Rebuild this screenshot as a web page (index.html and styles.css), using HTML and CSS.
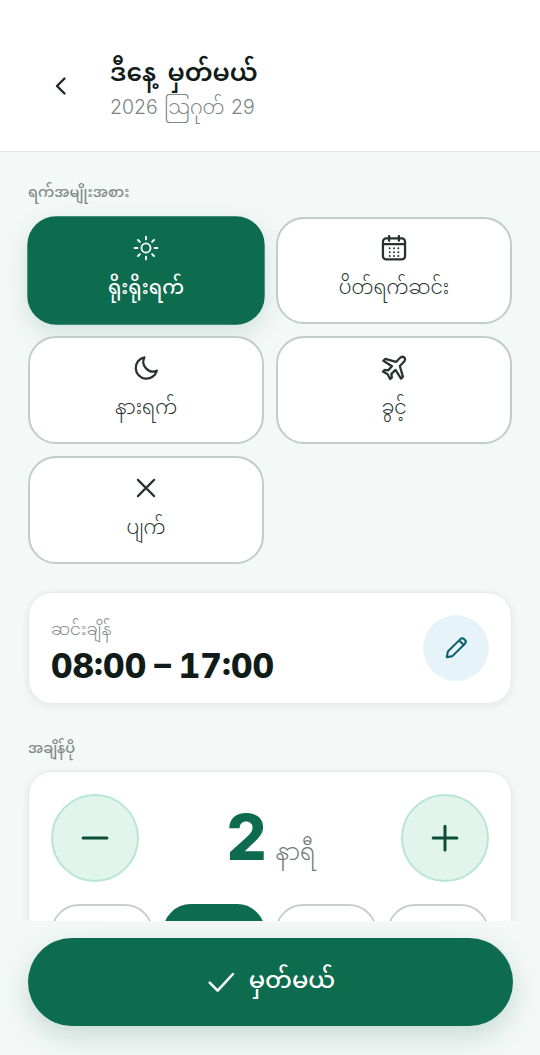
FILE: index.html
```html
<!DOCTYPE html>
<html lang="my">
<head>
<meta charset="utf-8">
<title>ဒီနေ့ မှတ်မယ်</title>
<link rel="stylesheet" href="styles.css">
</head>
<body>
<div class="app">
  <header class="header">
    <button class="back" aria-label="back">
      <svg viewBox="0 0 24 24" width="24" height="24"><path d="M15.5 4.5L8 12l7.5 7.5" class="st" stroke-width="2.4"/></svg>
    </button>
    <div class="titles">
      <div class="title">ဒီနေ့ မှတ်မယ်</div>
      <div class="date">2026 ဩဂုတ် 29</div>
    </div>
  </header>
  <main class="content">
    <div class="label">ရက်အမျိုးအစား</div>
    <div class="types">
      <button class="type active">
        <svg viewBox="0 0 24 24" width="26" height="26"><circle cx="12" cy="12" r="4.2" class="st" stroke-width="1.7"/><path d="M12 1.5v2.6M12 19.9v2.6M1.5 12h2.6M19.9 12h2.6M4.6 4.6l1.8 1.8M17.6 17.6l1.8 1.8M4.6 19.4l1.8-1.8M17.6 6.4l1.8-1.8" class="st" stroke-width="1.7"/></svg>
        <span>ရိုးရိုးရက်</span>
      </button>
      <button class="type">
        <svg viewBox="0 0 24 24" width="26" height="26"><rect x="1.8" y="3.2" width="20.4" height="19.4" rx="3" class="st" stroke-width="2.1"/><path d="M2 8.4h20M7.5 1v4.4M16.5 1v4.4" class="st" stroke-width="2.1"/><path d="M8 12.3h.01M12 12.3h.01M16 12.3h.01M8 16h.01M12 16h.01M16 16h.01M8 19.4h.01M12 19.4h.01M16 19.4h.01" class="st" stroke-width="1.8"/></svg>
        <span>ပိတ်ရက်ဆင်း</span>
      </button>
      <button class="type">
        <svg viewBox="0 0 24 24" width="26" height="26"><path d="M10.5 2.2A9.9 9.9 0 1 0 22 14.5 9 9 0 0 1 10.5 2.2z" class="st" stroke-width="2.1"/></svg>
        <span>နားရက်</span>
      </button>
      <button class="type">
        <svg viewBox="0 0 24 24" width="26" height="26"><path d="M21.6 2.4c-1.2-1-3-.8-4.2.4l-3.5 3.6L4 3.6 2.2 5.3l7.9 5.1-3.6 3.8-3.2-.4L1.8 15.3l4.3 2.5 2.4 4.4 1.5-1.5-.4-3.3 3.8-3.6 5.1 8 1.7-1.8-2.8-9.9 3.6-3.6c1.2-1.2 1.6-3.1.6-4.1z" class="st" stroke-width="2.1"/></svg>
        <span>ခွင့်</span>
      </button>
      <button class="type">
        <svg viewBox="0 0 24 24" width="26" height="26"><path d="M4.5 4.5l15 15M19.5 4.5l-15 15" class="st" stroke-width="2"/></svg>
        <span>ပျက်</span>
      </button>
    </div>

    <section class="card shift">
      <div class="shift-text">
        <div class="shift-label">ဆင်းချိန်</div>
        <div class="shift-time">08:00 – 17:00</div>
      </div>
      <button class="edit" aria-label="edit">
        <svg viewBox="0 0 24 24" width="26" height="26"><path d="M3.5 20.5l1-5.2L16 3.8c1-1 2.4-1 3.3-.1l1 1c.9.9.9 2.3-.1 3.3L8.7 19.5l-5.2 1zM15 5l4 4" class="st" stroke-width="1.9"/></svg>
      </button>
    </section>

    <div class="label ot-label">အချိန်ပို</div>
    <section class="card ot">
      <div class="stepper">
        <button class="step" aria-label="minus">
          <svg viewBox="0 0 24 24" width="30" height="30"><path d="M2.5 12h19" class="st" stroke-width="2.4"/></svg>
        </button>
        <div class="hours"><span class="num">2</span><span class="unit">နာရီ</span></div>
        <button class="step" aria-label="plus">
          <svg viewBox="0 0 24 24" width="30" height="30"><path d="M2.5 12h19M12 2.5v19" class="st" stroke-width="2.4"/></svg>
        </button>
      </div>
      <div class="chips">
        <button class="chip"></button>
        <button class="chip on"></button>
        <button class="chip"></button>
        <button class="chip"></button>
      </div>
    </section>
  </main>
  <footer class="footer">
    <button class="save">
      <svg viewBox="0 0 24 24" width="32" height="32"><path d="M3.5 12.5l6 6L21 6" class="st" stroke-width="1.9"/></svg>
      <span>မှတ်မယ်</span>
    </button>
  </footer>
</div>
</body>
</html>
```
FILE: styles.css
```css
* { box-sizing: border-box; }
html, body { margin: 0; padding: 0; }
body { font-family: Inter, "Noto Sans", "Noto Sans Myanmar", sans-serif; color: #111c18; background: #f4f8f6; }
button { font: inherit; color: inherit; padding: 0; cursor: pointer; }
.st { fill: none; stroke: currentColor; stroke-linecap: round; stroke-linejoin: round; }
.app { position: relative; width: 540px; height: 1055px; overflow: hidden; display: flex; flex-direction: column; }
.header { height: 152px; flex: none; background: #fff; border-bottom: 1px solid #dfe3e1; display: flex; align-items: center; padding: 21px 0 0 49px; gap: 37px; }
.back { width: 24px; height: 24px; border: 0; background: none; display: flex; color: #1c2925; }
.titles { display: flex; flex-direction: column; margin-top: 3px; }
.title { font-size: 25px; font-weight: 600; line-height: 34px; word-spacing: 5px; color: #111c18; }
.date { font-size: 19.5px; font-weight: 300; line-height: 28px; margin-top: 4px; word-spacing: 1px; color: #7c8682; }
.content { flex: 1; padding: 30px 28px 0; }
.label { font-size: 14.5px; font-weight: 500; line-height: 20px; color: #808a86; }
.types { display: grid; grid-template-columns: 1fr 1fr; gap: 12.33px 12px; margin-top: 14.5px; }
.type { height: 107.5px; border: 2px solid #c2ccc8; border-radius: 28px; background: #fff; display: flex; flex-direction: column; align-items: center; justify-content: center; gap: 9px; padding-bottom: 1px; font-size: 19.5px; font-weight: 300; color: #26332e; }
.type svg { display: block; }
.type span { line-height: 34px; }
.type.active { background: #0d6b4e; border-color: #0d6b4e; color: #fff; font-weight: 500; box-shadow: 0 0 0 .7px #0d6b4e, 0 8px 24px rgba(13,107,78,.16); }
.card { background: #fff; border-radius: 24px; border: 1px solid #e6eae8; box-shadow: 0 2px 8px rgba(20,50,40,.08); }
.shift { margin-top: 28.5px; height: 112px; display: flex; align-items: center; justify-content: space-between; padding: 0 22px; }
.shift-text { margin-top: 12px; }
.shift-label { font-size: 17px; font-weight: 300; line-height: 24px; color: #7f8985; }
.shift-time { font-size: 33.4px; font-weight: 800; line-height: 50px; word-spacing: -1px; font-variant-numeric: tabular-nums; color: #111c18; }
.edit { width: 66px; height: 66px; border-radius: 50%; border: 0; background: #e6f3f8; color: #0d5f6e; display: flex; align-items: center; justify-content: center; }
.ot-label { margin-top: 33.5px; }
.ot { margin-top: 13.5px; height: 260px; padding: 22px; }
.stepper { display: flex; align-items: center; justify-content: space-between; }
.step { width: 88px; height: 88px; border-radius: 50%; border: 2px solid #b9e5d3; background: #e2f5ec; color: #0a4c38; display: flex; align-items: center; justify-content: center; }
.hours { display: flex; align-items: baseline; gap: 9px; margin-left: 2px; }
.num { font-size: 63px; font-weight: 800; line-height: 80px; color: #0d6b4e; }
.unit { font-size: 23px; font-weight: 300; color: #6f7975; }
.chips { display: grid; grid-template-columns: repeat(4, 1fr); gap: 10px; margin-top: 22px; }
.chip { height: 88px; border-radius: 28px; border: 2px solid #c8cfcc; background: #fff; }
.chip.on { background: #0d6b4e; border-color: #0d6b4e; }
.footer { position: absolute; left: 0; right: 0; bottom: 0; height: 134px; padding: 17px 27.5px 0; background: #f4f8f6; }
.save { width: 100%; height: 88px; border: 0; border-radius: 44px; background: #0d6b4e; color: #fff; display: flex; align-items: center; justify-content: center; gap: 12px; font-size: 24px; font-weight: 500; box-shadow: 0 10px 28px rgba(13,107,78,.2); }
```
